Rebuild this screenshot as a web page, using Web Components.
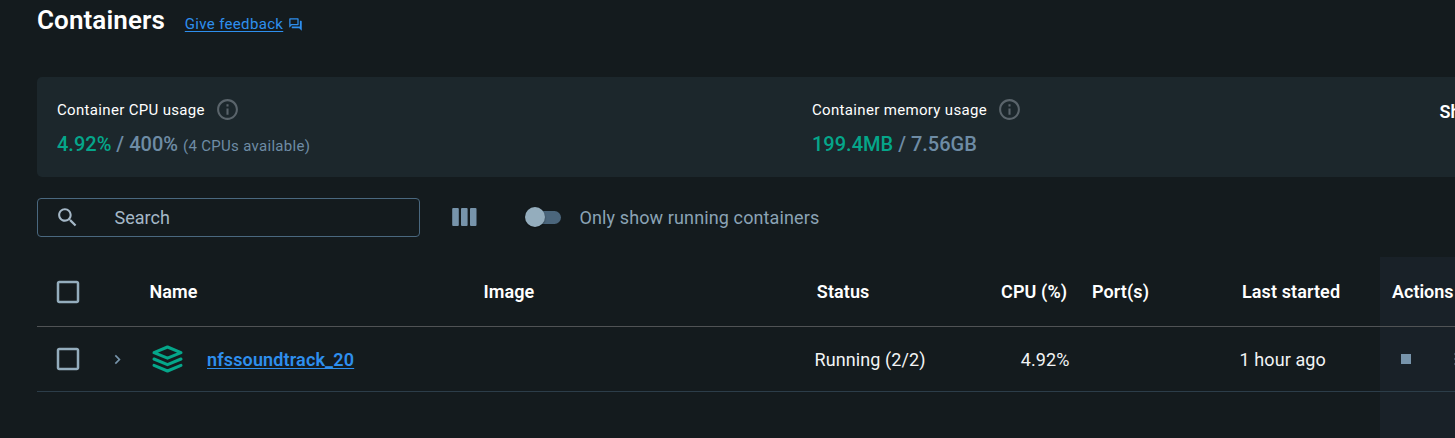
<!DOCTYPE html>
<html lang="en">
<head>
<meta charset="utf-8">
<title>Containers</title>
<style>
html,body{margin:0;height:100%;overflow:hidden;background:#141b1e}
body{font-family:Roboto,"Liberation Sans",sans-serif}
</style>
</head>
<body>
<containers-page></containers-page>
<script>
const define = (name, markup) => {
  const tpl = document.createElement('template');
  tpl.innerHTML = markup;
  customElements.define(name, class extends HTMLElement {
    constructor() {
      super();
      this.attachShadow({ mode: 'open' }).append(tpl.content.cloneNode(true));
    }
  });
};

define('info-icon', `<style>:host{display:block;width:25px;height:25px}svg{display:block}</style>
<svg width="25" height="25" viewBox="0 0 24 24" fill="#5a646b"><path d="M11 7h2v2h-2zm0 4h2v6h-2zm1-9C6.480 2 2 6.480 2 12s4.480 10 10 10 10-4.480 10-10S17.520 2 12 2m0 18c-4.410 0-8-3.590-8-8s3.590-8 8-8 8 3.590 8 8-3.590 8-8 8"/></svg>`);

define('check-box', `<style>:host{display:block;width:30px;height:30px}svg{display:block}</style>
<svg width="30" height="30" viewBox="0 0 24 24" fill="#94adbd"><path d="M19 5v14H5V5zm0-2H5c-1.100 0-2 .9-2 2v14c0 1.100.9 2 2 2h14c1.100 0 2-.9 2-2V5c0-1.100-.9-2-2-2"/></svg>`);

define('page-header', `<style>
:host{display:flex;align-items:baseline;height:77px;box-sizing:border-box;padding-left:37px;line-height:41px}
h1{margin:0;font-size:26px;font-weight:600;letter-spacing:.1px;color:#fff;width:147.800px;white-space:nowrap}
a{font-size:15px;letter-spacing:.33px;color:#2e8fee;text-decoration:underline;text-underline-offset:2px;width:98.500px;white-space:nowrap}
svg{margin-left:4.700px;align-self:flex-start;margin-top:17px}
</style><h1>Containers</h1><a>Give feedback</a>
<svg width="15" height="15" viewBox="0 0 24 24" fill="#2e8fee"><path d="M15 4v7H5.170l-.59.59-.58.58V4zm1-2H3c-.55 0-1 .45-1 1v14l4-4h10c.55 0 1-.45 1-1V3c0-.55-.45-1-1-1m5 4h-2v9H6v2c0 .55.45 1 1 1h11l4 4V7c0-.55-.45-1-1-1"/></svg>`);

define('usage-stat', `<style>
:host{display:block;width:755px;flex:none;white-space:nowrap}
.label{display:flex;align-items:center;gap:10px;height:25px;font-size:15px;letter-spacing:.33px;color:#fff}
.value{display:flex;align-items:baseline;margin-top:7px;line-height:30px;font-size:20px;font-weight:500;color:#6e8ca5;white-space:pre}
::slotted([slot=used]){color:#05a68a}
::slotted([slot=note]){font-size:15px;font-weight:400;letter-spacing:.31px;margin-left:5px}
</style><div class="label"><slot name="label"></slot><info-icon></info-icon></div>
<div class="value"><slot name="used"></slot> / <slot name="limit"></slot><slot name="note"></slot></div>`);

define('usage-card', `<style>
:host{display:flex;margin-left:37px;height:100px;box-sizing:border-box;padding:20px 0 0 20px;background:#1c272c;border-radius:5px 0 0 5px;overflow:hidden;color:#fff}
.show{font-size:18px;font-weight:600;line-height:30px;margin-left:-127.500px;white-space:nowrap}
</style><slot></slot><span class="show">Sh</span>`);

define('search-box', `<style>
:host{display:flex;align-items:center;box-sizing:border-box;width:383px;height:39px;border:1px solid #4a687f;border-radius:4px;padding-left:17px;font-size:18px;color:#a5b8c7}
svg{margin-right:34.500px}
</style><svg width="25" height="25" viewBox="0 0 24 24" fill="#a5b8c7"><path d="M15.500 14h-.79l-.28-.27C15.410 12.590 16 11.110 16 9.500 16 5.910 13.090 3 9.500 3S3 5.910 3 9.500 5.910 16 9.500 16c1.610 0 3.090-.59 4.230-1.570l.27.28v.79l5 4.990L20.490 19zm-6 0C7.010 14 5 11.990 5 9.500S7.010 5 9.500 5 14 7.010 14 9.500 11.990 14 9.500 14"/></svg><span>Search</span>`);

define('toggle-switch', `<style>
:host{display:flex;align-items:center;width:36px;height:20px}
.track{width:33px;height:13px;margin-left:3px;border-radius:7px;background:#4b667c}
.thumb{width:20px;height:20px;flex:none;border-radius:50%;background:#94adbd;margin-left:-36px;box-shadow:0 1px 2px #0006}
</style><div class="track"></div><div class="thumb"></div>`);

define('tool-bar', `<style>
:host{display:flex;align-items:center;height:39px;padding:21px 0 20px 37px;font-size:18px;color:#8ba3b5;white-space:nowrap}
svg{margin:-1px 48px 0 32px}
toggle-switch{margin-top:-1px}
.label{margin-left:18.500px;letter-spacing:.12px}
</style><search-box></search-box>
<svg width="25" height="18" viewBox="0 0 25 18" fill="#7794ab"><rect x=".2" width="6.600" height="18" rx="1"/><rect x="9" width="6.600" height="18" rx="1"/><rect x="18" width="6.500" height="18" rx="1"/></svg>
<toggle-switch></toggle-switch><span class="label">Only show running containers</span>`);

define('table-row', `<style>
:host{display:grid;grid-template-columns:112.500px 334px 332px 154px 100px 170px 140.500px 75px;margin-left:37px;box-sizing:border-box;align-items:center;border-bottom:1px solid #2c3d49;font-size:18px;letter-spacing:.1px;color:#f2f4f5;white-space:nowrap}
:host([head]){height:70px;font-weight:600;color:#fff;border-color:#505355}
:host(:not([head])){height:65px}
</style><slot></slot>`);

define('layers-icon', `<style>:host{display:block;width:31px;height:28px}svg{display:block}</style>
<svg width="31" height="28" viewBox="0 0 31 28" fill="none" stroke="#05a68a" stroke-width="3" stroke-linejoin="round" stroke-linecap="round"><path d="M15.500 2 29 7.700 15.500 13.200 2 7.700Z"/><path d="M2 14 15.500 19.700 29 14M2 20.300 15.500 26 29 20.300"/></svg>`);

define('containers-table', `<style>
:host{display:grid;grid-template-columns:minmax(0,1fr);height:181px;align-content:start;background:linear-gradient(90deg,transparent 1380px,#192128 1380px);overflow:hidden}
.lead{display:flex;align-items:center;padding-left:16px}
.lead svg{margin-left:23px}
.name{display:flex;align-items:center;padding-left:2px}
a{color:#2e8fee;font-weight:600;letter-spacing:.15px;text-decoration:underline;text-underline-offset:2px;margin-left:24.500px}
.end{justify-self:end}
.cell,a{position:relative;top:.5px}
.actions{display:flex;align-items:center;padding-left:21px}
.stop{width:10px;height:10px;flex:none;background:#7794ab}
.more{margin-left:42.500px;flex:none}
</style>
<table-row head><div class="lead"><check-box></check-box></div><span>Name</span><span>Image</span><span style="padding-left:1.300px">Status</span><span class="end" style="margin-right:2.300px">CPU (%)</span><span style="padding-left:22.500px">Port(s)</span><span style="padding-left:2.500px">Last started</span><span style="padding-left:12px;letter-spacing:0">Actions</span></table-row>
<table-row><div class="lead"><check-box></check-box><svg width="25" height="25" viewBox="0 0 24 24" fill="#7794ab"><path d="M9.500 7.500 8.400 8.600 11.800 12l-3.400 3.400 1.100 1.100L14 12z"/></svg></div>
<div class="name"><layers-icon></layers-icon><a>nfssoundtrack_20</a></div><span></span><span class="cell" style="margin-left:-1px">Running (2/2)</span><span class="end cell">4.92%</span><span></span><span class="cell">1 hour ago</span>
<div class="actions"><div class="stop"></div><svg class="more" width="4" height="14" fill="#7794ab"><circle cx="2" cy="2" r="1.500"/><circle cx="2" cy="7" r="1.500"/><circle cx="2" cy="12" r="1.500"/></svg></div></table-row>`);

define('containers-page', `<style>:host{display:block;height:438px;overflow:hidden;background:#141b1e}</style>
<page-header></page-header>
<usage-card>
<usage-stat><span slot="label">Container CPU usage</span><span slot="used">4.92%</span><span slot="limit">400%</span><span slot="note">(4 CPUs available)</span></usage-stat>
<usage-stat><span slot="label">Container memory usage</span><span slot="used">199.4MB</span><span slot="limit">7.56GB</span></usage-stat>
</usage-card>
<tool-bar></tool-bar>
<containers-table></containers-table>`);
</script>
</body>
</html>
